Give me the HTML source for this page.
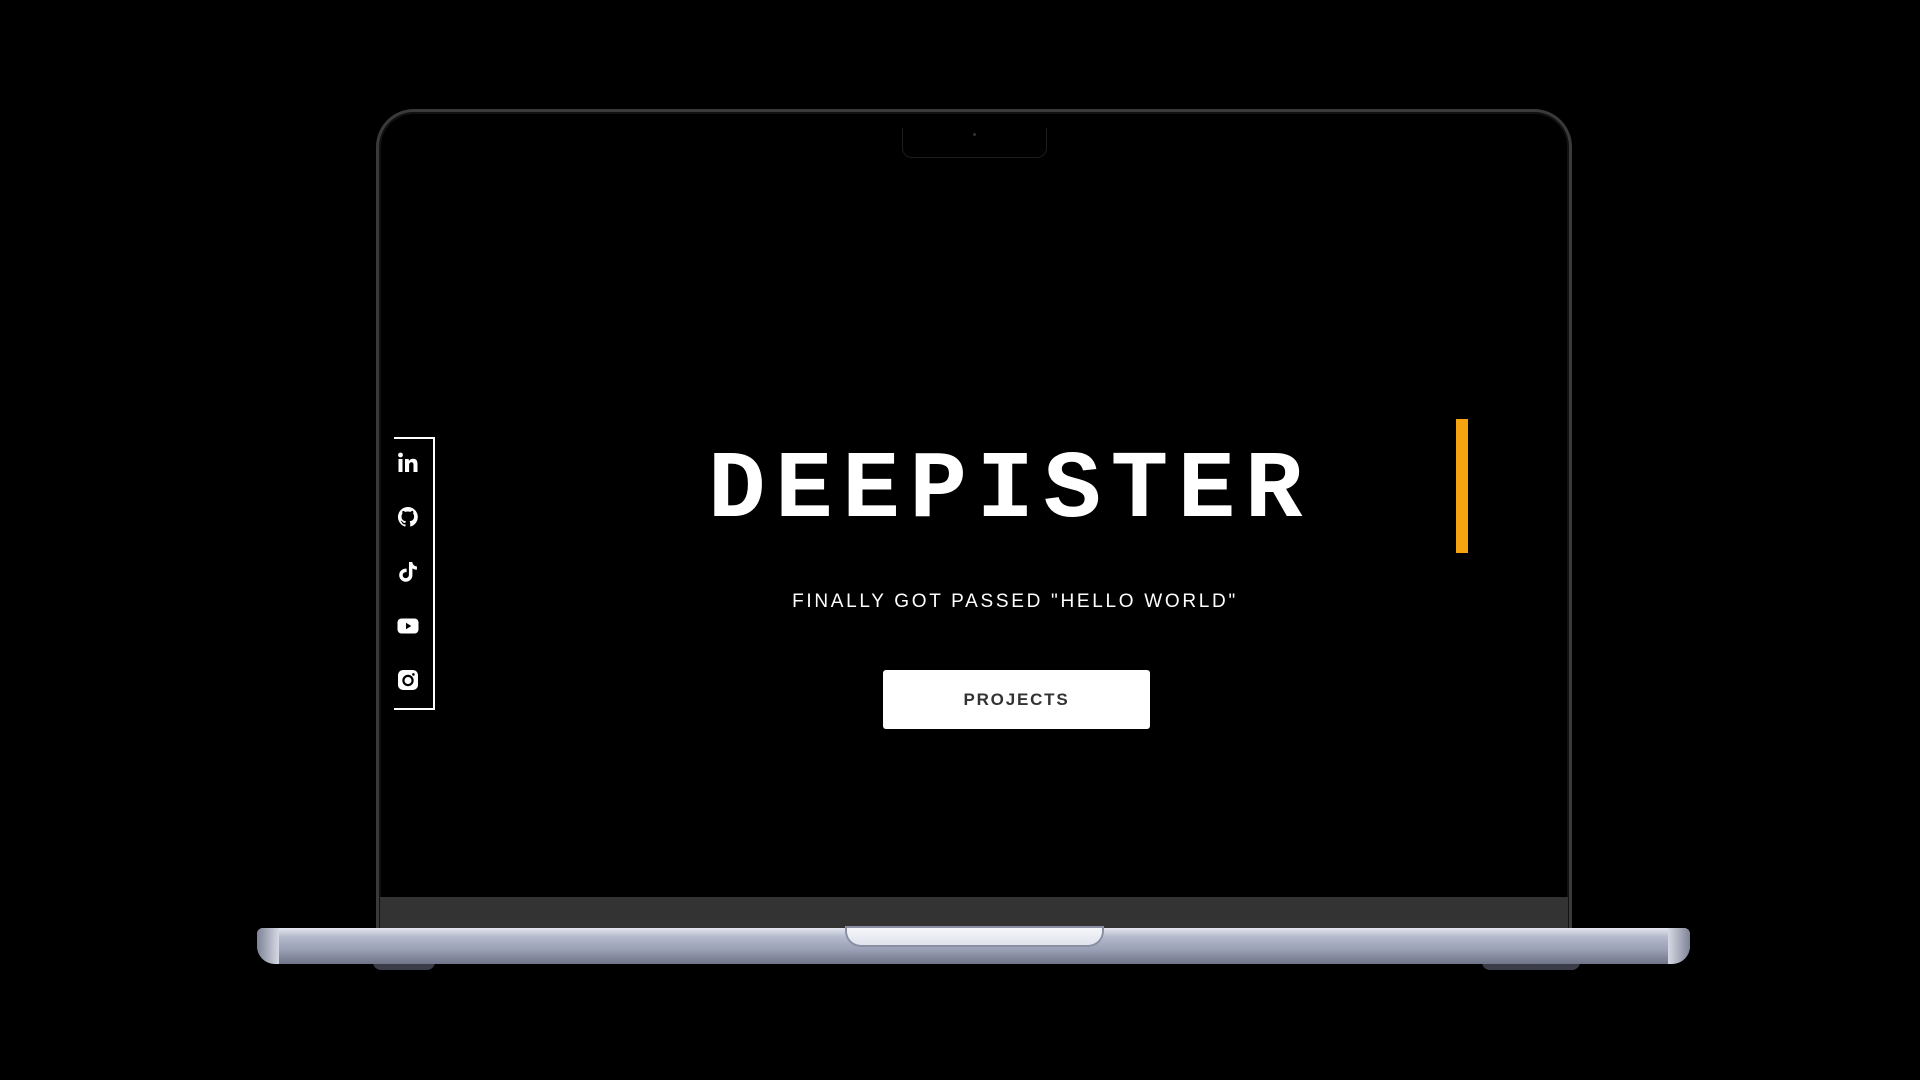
<!DOCTYPE html>
<html><head><meta charset="utf-8"><style>
html,body{margin:0;padding:0;background:#000;width:1920px;height:1080px;overflow:hidden;position:relative;font-family:"Liberation Sans",sans-serif}
.abs{position:absolute}
.lid{left:376px;top:109px;width:1196px;height:820px;border-radius:38px 38px 0 0;background:#000;box-sizing:border-box;border:3px solid #3a3a3a;border-bottom:none;box-shadow:inset 0 0 0 2px #111}
.chin{left:380px;top:897px;width:1188px;height:32px;background:#333}
.notch{left:902px;top:128px;width:145px;height:30px;border:1.5px solid #1c1c1c;border-top:none;border-radius:0 0 10px 10px;box-sizing:border-box}
.base{left:257px;top:928px;width:1433px;height:36px;border-radius:6px 6px 18px 18px;background:linear-gradient(180deg,#e4e7f0 0%,#b4b9cb 25%,#9aa0b5 60%,#6f7488 100%)}
.base:before{content:"";position:absolute;left:0;top:0;width:22px;height:36px;border-radius:6px 0 0 18px;background:linear-gradient(90deg,#7d8296,#d6d9e4)}
.base:after{content:"";position:absolute;right:0;top:0;width:22px;height:36px;border-radius:0 6px 18px 0;background:linear-gradient(270deg,#7d8296,#d6d9e4)}
.lip{left:847px;top:928px;width:255px;height:17px;background:linear-gradient(180deg,#f6f7fb,#dfe2ec);border-radius:0 0 14px 14px;box-shadow:0 0 0 2px #8a8fa3}
.foot{top:962px;height:8px;background:#3a3d48;border-radius:0 0 10px 10px}
.social{left:394px;top:437px;width:41px;height:273px;box-sizing:border-box;border:2px solid #fff;border-left:none}
.ic{position:absolute;left:396px;width:24px;height:24px}
.title{left:680px;top:431px;width:660px;text-align:center;color:#fff;font-family:"Liberation Mono",monospace;font-weight:bold;font-size:96px;letter-spacing:9.5px;line-height:120px}
.bar{left:1456px;top:419px;width:12px;height:134px;background:#f5a30f}
.sub{left:760px;top:589px;width:510px;text-align:center;color:#fff;font-size:19px;letter-spacing:2.7px;line-height:26px}
.btn{left:883px;top:670px;width:267px;height:59px;background:#fff;border-radius:3px;color:#333;font-weight:bold;font-size:17px;letter-spacing:1.8px;text-align:center;line-height:59px}
</style></head><body>
<div class="abs lid"></div>
<div class="abs chin"></div>
<div class="abs notch"></div>
<div class="abs" style="left:973px;top:133px;width:3px;height:3px;border-radius:50%;background:#333"></div>
<div class="abs foot" style="left:373px;width:62px"></div>
<div class="abs foot" style="left:1482px;width:98px"></div>
<div class="abs base"></div>
<div class="abs lip"></div>

<div class="abs social"></div>
<svg class="ic" style="top:451px" viewBox="0 0 24 24"><rect x="2.5" y="8" width="4" height="13" fill="#fff"/><circle cx="4.5" cy="4" r="2.4" fill="#fff"/><path d="M9 8h3.8v2c.8-1.4 2.3-2.3 4.3-2.3 3.2 0 4.4 2 4.4 5.4V21h-4v-7c0-1.6-.5-2.7-2-2.7s-2.4 1.1-2.4 2.7v7H9z" fill="#fff"/></svg>
<svg class="ic" style="top:505px" viewBox="0 0 24 24"><path d="M12 2a10 10 0 0 0-3.2 19.5c.5.1.7-.2.7-.5v-1.8c-2.8.6-3.4-1.3-3.4-1.300-.5-1.2-1.1-1.5-1.1-1.5-.9-.6.1-.6.1-.6 1 .1 1.5 1 1.5 1 .9 1.5 2.4 1.1 2.9.8.1-.7.4-1.1.6-1.3-2.2-.3-4.6-1.1-4.6-5 0-1.1.4-2 1-2.7-.1-.3-.4-1.3.1-2.7 0 0 .8-.3 2.7 1a9.4 9.4 0 0 1 5 0c1.9-1.3 2.7-1 2.7-1 .5 1.4.2 2.4.1 2.7.6.7 1 1.6 1 2.7 0 3.9-2.4 4.7-4.6 5 .4.3.7.9.7 1.9V21c0 .3.2.6.7.5A10 10 0 0 0 12 2z" fill="#fff"/></svg>
<svg class="ic" style="top:560px" viewBox="0 0 24 24"><path d="M13 2h3.3c.3 2.6 1.9 4.2 4.6 4.4v3.4c-1.7 0-3.2-.5-4.5-1.4v6.7c0 3.7-2.9 6.6-6.6 6.6S3.2 18.8 3.2 15.1c0-3.9 3.4-6.8 7.4-6.4v3.5c-1.8-.4-3.9.8-3.9 2.9 0 1.7 1.3 3 3 3s3.2-1.2 3.2-3.3z" fill="#fff"/></svg>
<svg class="ic" style="top:614px" viewBox="0 0 24 24"><rect x="1.5" y="4.5" width="21" height="15" rx="4" fill="#fff"/><path d="M10 8.8v6.4l5.3-3.2z" fill="#000"/></svg>
<svg class="ic" style="top:668px" viewBox="0 0 24 24"><rect x="2" y="2" width="20" height="20" rx="5" fill="#fff"/><circle cx="12" cy="12.5" r="4.6" fill="none" stroke="#000" stroke-width="2.2"/><circle cx="17.4" cy="6.4" r="1.3" fill="#000"/></svg>

<div class="abs title">DEEPISTER</div>
<div class="abs bar"></div>
<div class="abs sub">FINALLY GOT PASSED "HELLO WORLD"</div>
<div class="abs btn">PROJECTS</div>
</body></html>
